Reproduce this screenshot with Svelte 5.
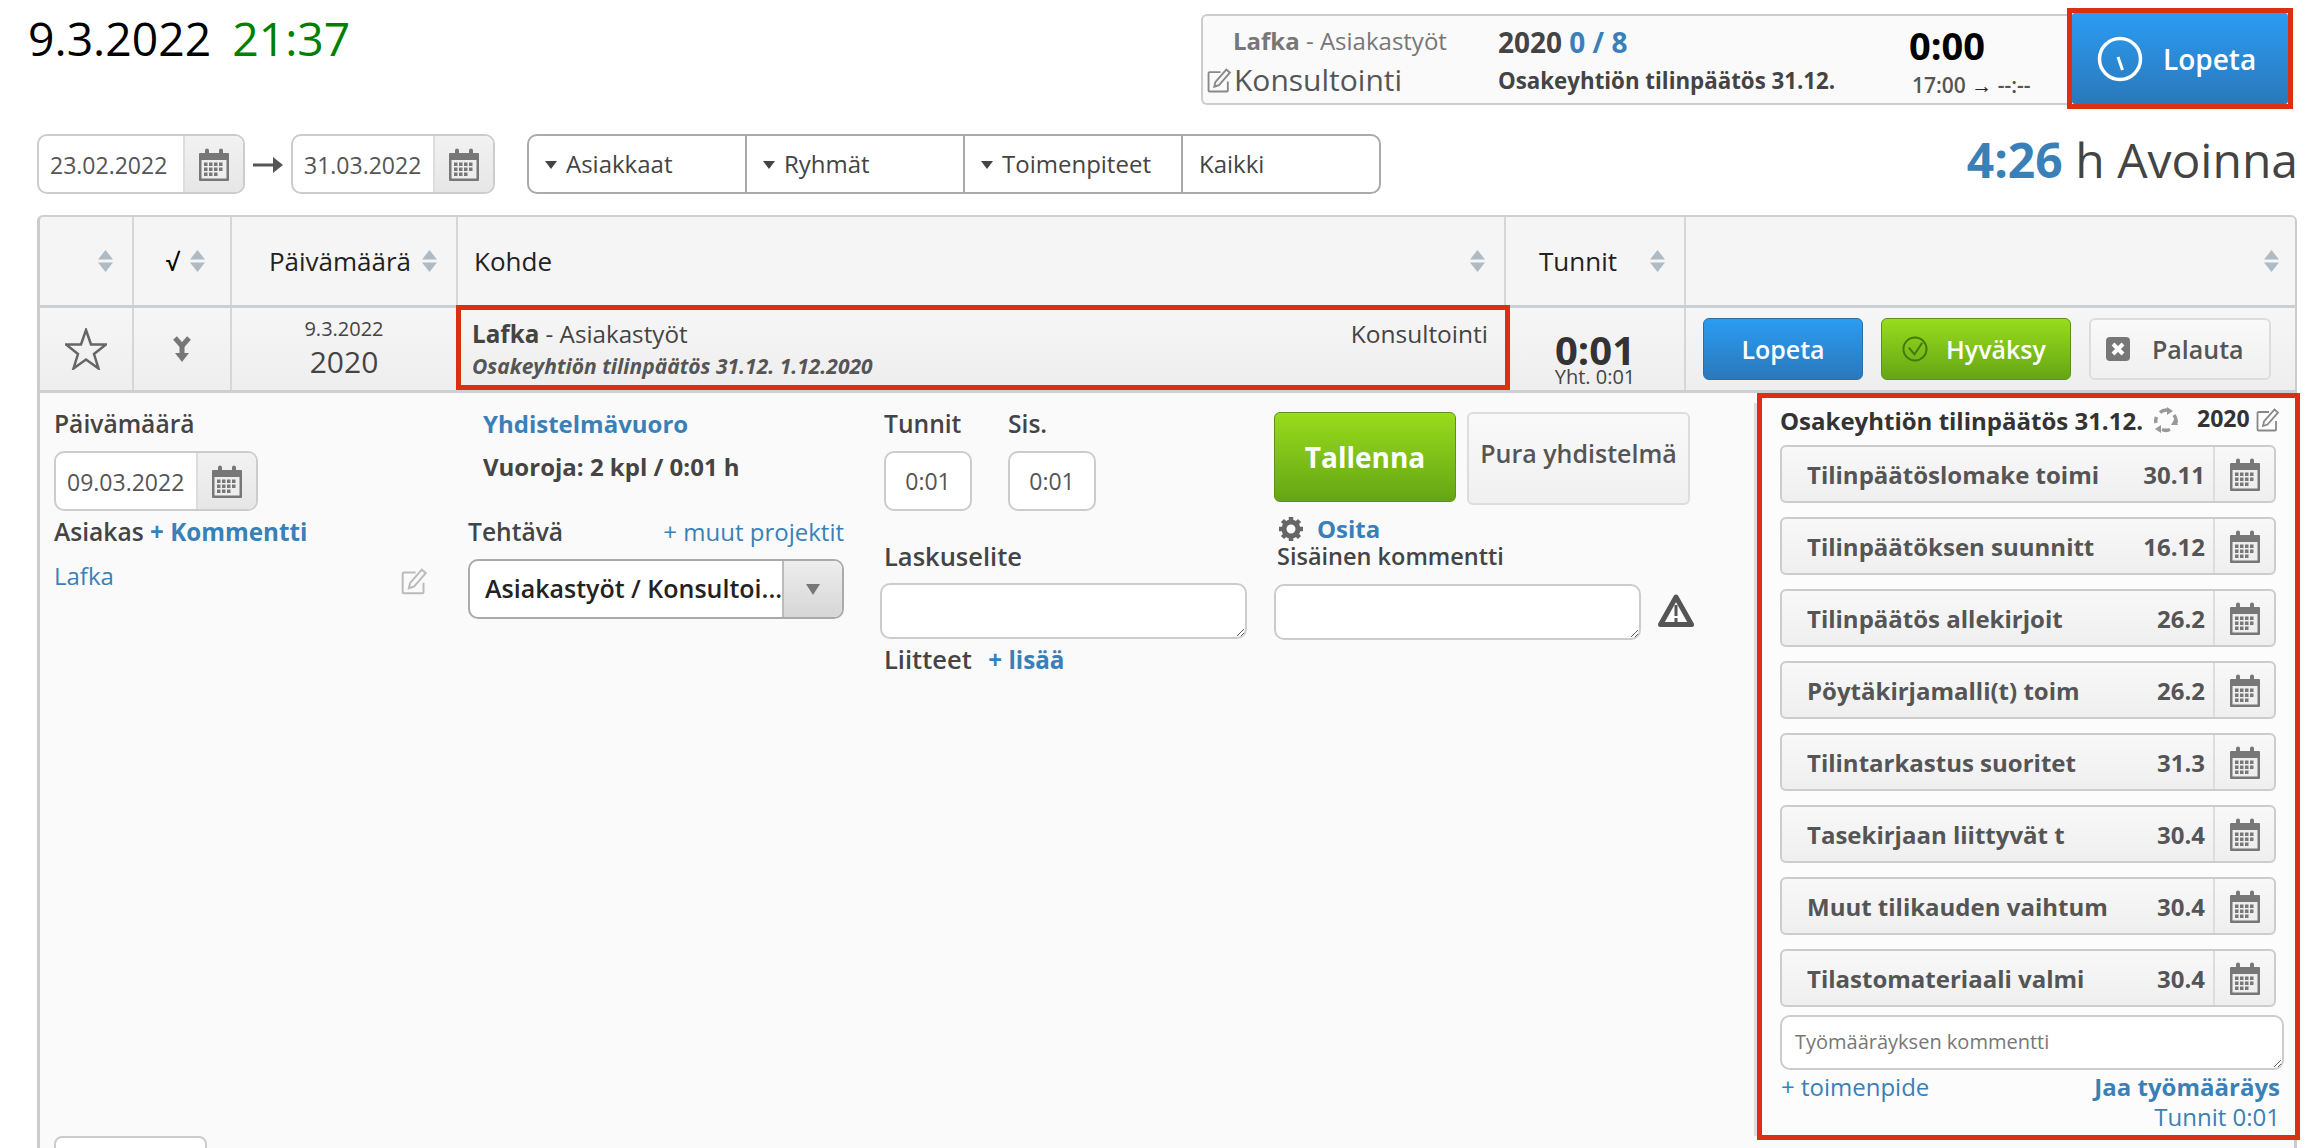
<script>
  const filters = ['Asiakkaat', 'Ryhmät', 'Toimenpiteet'];
  const tasks = [
    { name: 'Tilinpäätöslomake toimi', date: '30.11' },
    { name: 'Tilinpäätöksen suunnitt', date: '16.12' },
    { name: 'Tilinpäätös allekirjoit', date: '26.2' },
    { name: 'Pöytäkirjamalli(t) toim', date: '26.2' },
    { name: 'Tilintarkastus suoritet', date: '31.3' },
    { name: 'Tasekirjaan liittyvät t', date: '30.4' },
    { name: 'Muut tilikauden vaihtum', date: '30.4' },
    { name: 'Tilastomateriaali valmi', date: '30.4' }
  ];
</script>

{#snippet calendar()}
  <svg class="cal" width="30" height="33" viewBox="0 0 30 33">
    <path d="M1 5h5V2.500a2 2 0 0 1 4 0V5h10V2.500a2 2 0 0 1 4 0V5h5a1 1 0 0 1 1 1v26a1 1 0 0 1-1 1H1a1 1 0 0 1-1-1V6a1 1 0 0 1 1-1z" fill="#777" />
    <rect x="2.500" y="12" width="25" height="18.500" fill="#eee" />
    {#each [14.500, 19.500, 24.500] as y}
      {#each [5, 10, 15, 20] as x}
        {#if !(y === 24.500 && x === 20)}
          <rect {x} {y} width="3.500" height="3.500" fill="#777" />
        {/if}
      {/each}
    {/each}
  </svg>
{/snippet}

{#snippet sort()}
  <svg class="sort" width="17" height="22" viewBox="0 0 17 22">
    <path d="M8.500 0 16 9.500H1z" fill="#aebbc5" />
    <path d="M8.500 22 16 12.500H1z" fill="#aebbc5" />
  </svg>
{/snippet}

{#snippet edit(size, color)}
  <svg width={size} height={size} viewBox="0 0 24 24" fill="none" stroke={color} stroke-width="1.800">
    <path d="M20 13v8.500a1 1 0 0 1-1 1H2.500a1 1 0 0 1-1-1V5a1 1 0 0 1 1-1H13" />
    <path d="M7 18l1-4.500L18.500 1.500l3.500 3L11.500 16.500z" />
  </svg>
{/snippet}

<div class="page">
  <header class="top">
    <div class="now">9.3.2022 <span class="clock">21:37</span></div>
    <div class="timer">
      <div class="t-who">
        <div class="t-client"><b>Lafka</b> - Asiakastyöt</div>
        <div class="t-type">{@render edit(25, '#888')}<span>Konsultointi</span></div>
      </div>
      <div class="t-job">
        <div class="t-year">2020 <span class="blue">0 / 8</span></div>
        <div class="t-title">Osakeyhtiön tilinpäätös 31.12.</div>
      </div>
      <div class="t-time">
        <div class="t-big">0:00</div>
        <div class="t-range">17:00 <span class="arr">→</span> --:--</div>
      </div>
      <div class="stop-wrap">
        <button class="stop">
          <svg width="46" height="46" viewBox="0 0 46 46" fill="none" stroke="#fff">
            <circle cx="23" cy="23" r="20.500" stroke-width="3.500" />
            <path d="M21 21l4.500 13" stroke-width="3" />
          </svg>
          Lopeta
        </button>
      </div>
    </div>
  </header>

  <div class="filters">
    <div class="date-input">
      <span class="val">23.02.2022</span><span class="addon">{@render calendar()}</span>
    </div>
    <svg class="arrow" width="30" height="20" viewBox="0 0 30 20"><path d="M0 8.500h20V2l10 8-10 8v-6.500H0z" fill="#555" /></svg>
    <div class="date-input second">
      <span class="val">31.03.2022</span><span class="addon">{@render calendar()}</span>
    </div>
    <div class="seg">
      {#each filters as f}
        <div class="seg-item"><i class="caret"></i>{f}</div>
      {/each}
      <div class="seg-item last">Kaikki</div>
    </div>
    <div class="open"><b>4:26</b> h Avoinna</div>
  </div>

  <div class="table">
    <div class="cols head">
      <div class="c end">{@render sort()}</div>
      <div class="c end check"><span>√</span>{@render sort()}</div>
      <div class="c end date-h"><span>Päivämäärä</span>{@render sort()}</div>
      <div class="c between kohde-h"><span>Kohde</span>{@render sort()}</div>
      <div class="c between tunnit-h"><span>Tunnit</span>{@render sort()}</div>
      <div class="c end last-h">{@render sort()}</div>
    </div>
    <div class="cols row">
      <div class="c center">
        <svg width="42" height="42" viewBox="0 0 42 42"><path d="M21 2l5 14.500h15L29 26l4.500 14.500L21 31.500 8.500 40.500 13 26 1 16.500h15z" fill="none" stroke="#666" stroke-width="2.500" /></svg>
      </div>
      <div class="c center">
        <svg width="20" height="26" viewBox="0 0 20 26"><path d="M3 2l7 8 7-8" fill="none" stroke="#777" stroke-width="5" /><path d="M10 9v10" stroke="#777" stroke-width="5" /><path d="M3 17h14l-7 9z" fill="#777" /></svg>
      </div>
      <div class="c date-c">
        <div class="d-small">9.3.2022</div>
        <div class="d-year">2020</div>
      </div>
      <div class="kohde">
        <div class="k-line"><span><b>Lafka</b> - Asiakastyöt</span><span class="k-type">Konsultointi</span></div>
        <div class="k-sub">Osakeyhtiön tilinpäätös 31.12. 1.12.2020</div>
      </div>
      <div class="c hours">
        <div class="h-big">0:01</div>
        <div class="h-small">Yht. 0:01</div>
      </div>
      <div class="c actions">
        <button class="btn blue-btn">Lopeta</button>
        <button class="btn green-btn">
          <svg width="26" height="26" viewBox="0 0 27 27" fill="none" stroke="#3f7a0d" stroke-width="2"><circle cx="13.500" cy="13.500" r="12" /><path d="M7 12l6 7 8-12" /></svg>
          Hyväksy
        </button>
        <button class="btn gray-btn">
          <svg width="24" height="24" viewBox="0 0 24 24"><rect width="24" height="24" rx="4" fill="#777" /><path d="M7 7l10 10M17 7L7 17" stroke="#fff" stroke-width="4" /></svg>
          Palauta
        </button>
      </div>
    </div>

    <div class="detail">
      <div class="main">
        <div class="forms">
          <div class="col col1">
            <div class="label">Päivämäärä</div>
            <div class="date-input small">
              <span class="val">09.03.2022</span><span class="addon">{@render calendar()}</span>
            </div>
            <div class="label client"><span>Asiakas</span> <a class="link bold">+ Kommentti</a></div>
            <div class="client-row">
              <a class="link">Lafka</a>
              {@render edit(27, '#bbb')}
            </div>
          </div>

          <div class="col col2">
            <div class="label indent"><a class="link">Yhdistelmävuoro</a></div>
            <div class="shifts indent">Vuoroja: 2 kpl / 0:01 h</div>
            <div class="task-head"><span class="label">Tehtävä</span><a class="link">+ muut projektit</a></div>
            <div class="select">
              <span class="sel-val">Asiakastyöt / Konsultoi...</span>
              <span class="sel-btn"><i></i></span>
            </div>
          </div>

          <div class="col col3">
            <div class="pair">
              <div>
                <div class="label">Tunnit</div>
                <div class="time-box">0:01</div>
              </div>
              <div>
                <div class="label">Sis.</div>
                <div class="time-box">0:01</div>
              </div>
            </div>
            <div class="label lasku">Laskuselite</div>
            <textarea class="area"></textarea>
            <div class="label attach"><span>Liitteet</span> <a class="link bold">+ lisää</a></div>
          </div>

          <div class="col col4">
            <div class="pair2">
              <button class="save">Tallenna</button>
              <button class="undo">Pura yhdistelmä</button>
            </div>
            <div class="split">
              <svg width="26" height="26" viewBox="0 0 26 26"><circle cx="13" cy="13" r="7" fill="none" stroke="#666" stroke-width="5" /><path d="M13 1v5M13 20v5M1 13h5M20 13h5M4.500 4.500l3.500 3.500M18 18l3.500 3.500M21.500 4.500L18 8M8 18l-3.500 3.500" stroke="#666" stroke-width="4.500" /></svg>
              <a class="link bold">Osita</a>
            </div>
            <div class="label inner">Sisäinen kommentti</div>
            <div class="area-row">
              <textarea class="area"></textarea>
              <svg width="36" height="33" viewBox="0 0 36 33"><path d="M18 3 33.500 30.500h-31z" fill="none" stroke="#555" stroke-width="5" stroke-linejoin="round" /><path d="M18 11v11M18 24v4" stroke="#555" stroke-width="3" /></svg>
            </div>
          </div>
        </div>
        <div class="stub"></div>
      </div>

      <aside class="side">
        <div class="side-head">
          <span class="side-title">Osakeyhtiön tilinpäätös 31.12.</span>
          <svg width="26" height="26" viewBox="0 0 26 26" fill="none" stroke="#999" stroke-width="3.500"><path d="M7 5.500a10 10 0 0 1 7-2.500M21 8a10 10 0 0 1 2 8M17 22.500a10 10 0 0 1-8 0M3 16a10 10 0 0 1 .5-6" /><path d="M14 0l6 4-6 4zM25 18l-7 0 3.500-6zM8 18l0 8-6-4z" fill="#999" stroke="none" /></svg>
          <span class="side-year">2020</span>
          {@render edit(24, '#888')}
        </div>
        {#each tasks as t}
          <div class="task">
            <span class="task-name">{t.name}</span>
            <span class="task-date">{t.date}</span>
            <span class="task-cal">{@render calendar()}</span>
          </div>
        {/each}
        <textarea class="note" placeholder="Työmääräyksen kommentti"></textarea>
        <div class="side-foot">
          <a class="link">+ toimenpide</a>
          <a class="link bold">Jaa työmääräys</a>
        </div>
        <div class="side-total"><a class="link">Tunnit 0:01</a></div>
      </aside>
    </div>
  </div>
</div>

<style>
  :global(body) {
    margin: 0;
    background: #fff;
    overflow: hidden;
  }
  .page {
    width: 2312px;
    height: 1148px;
    overflow: hidden;
    font-family: "Open Sans", sans-serif;
    color: #333;
    font-size: 24px;
    box-sizing: border-box;
  }
  button {
    font-family: inherit;
    cursor: pointer;
  }
  b {
    font-weight: 700;
  }
  .blue, .link {
    color: #3a80b8;
  }
  .bold {
    font-weight: 700;
  }

  /* top bar */
  .top {
    display: flex;
    justify-content: space-between;
    padding: 8px 19px 0 28px;
    height: 134px;
    box-sizing: border-box;
  }
  .now {
    font-size: 46.300px;
    line-height: 62px;
    color: #000;
  }
  .clock {
    color: #008000;
    margin-left: 9px;
  }
  .timer {
    display: flex;
    width: 1092px;
    height: 101px;
  }
  .t-who, .t-job, .t-time {
    margin: 6px 0;
    height: 91px;
    box-sizing: border-box;
    background: #fafafa;
    border-top: 2px solid #ccc;
    border-bottom: 2px solid #ccc;
  }
  .t-who {
    width: 297px;
    border-left: 2px solid #ccc;
    border-radius: 6px 0 0 6px;
    padding: 6px 0 0 4px;
  }
  .t-client {
    font-size: 24px;
    line-height: 38px;
    color: #777;
    padding-left: 26px;
  }
  .t-type {
    display: flex;
    align-items: center;
    gap: 2px;
    font-size: 30px;
    line-height: 40px;
    color: #555;
  }
  .t-job {
    width: 411px;
    padding-top: 8px;
  }
  .t-year {
    font-size: 28px;
    line-height: 36px;
    font-weight: 700;
    color: #444;
  }
  .t-title {
    font-size: 22.300px;
    line-height: 42px;
    font-weight: 700;
    color: #444;
  }
  .t-time {
    width: 158px;
    padding: 4px 0 0 0;
  }
  .t-big {
    font-size: 38px;
    line-height: 50px;
    font-weight: 700;
    color: #000;
  }
  .t-range {
    font-size: 21px;
    line-height: 30px;
    font-weight: 600;
    color: #555;
    padding-left: 3px;
  }
  .arr {
    color: #222;
    font-weight: 700;
  }
  .stop-wrap {
    width: 226px;
    height: 101px;
    box-sizing: border-box;
    border: 5px solid #dc2e10;
    flex: none;
  }
  .stop {
    width: 100%;
    height: 100%;
    border: 0;
    border-radius: 3px;
    background: linear-gradient(#2b9cf2, #2a78ba);
    color: #fff;
    font-size: 28px;
    font-weight: 600;
    display: flex;
    align-items: center;
    gap: 20px;
    padding: 0 0 0 25px;
  }

  /* filters */
  .filters {
    display: flex;
    align-items: flex-start;
    padding-left: 37px;
    padding-right: 14px;
    height: 81px;
  }
  .date-input {
    display: flex;
    width: 208px;
    height: 60px;
    box-sizing: border-box;
    border: 2px solid #ccc;
    border-radius: 10px;
    background: #fff;
    overflow: hidden;
    font-size: 23px;
    color: #555;
  }
  .date-input.second {
    width: 204px;
  }
  .date-input.small {
    width: 204px;
  }
  .val {
    flex: 1;
    padding-left: 11px;
    line-height: 58px;
  }
  .addon {
    width: 60px;
    flex: none;
    background: linear-gradient(#f2f2f2, #e6e6e6);
    border-left: 2px solid #ddd;
    display: flex;
    align-items: center;
    justify-content: center;
    box-sizing: border-box;
  }
  .arrow {
    margin: 21px 8px 0;
  }
  .seg {
    display: flex;
    margin-left: 32px;
    height: 60px;
    box-sizing: border-box;
    border: 2px solid #aaa;
    border-radius: 10px;
    background: #fff;
    width: 854px;
  }
  .seg-item {
    width: 218px;
    box-sizing: border-box;
    border-right: 2px solid #aaa;
    padding-left: 16px;
    line-height: 54px;
    color: #444;
    display: flex;
    align-items: center;
    gap: 9px;
  }
  .seg-item.last {
    flex: 1;
    border-right: 0;
    padding-left: 16px;
  }
  .caret {
    width: 0;
    height: 0;
    border-left: 6px solid transparent;
    border-right: 6px solid transparent;
    border-top: 8px solid #444;
    margin-top: 2px;
  }
  .open {
    margin-left: auto;
    font-size: 48px;
    line-height: 52px;
    color: #444;
  }
  .open b {
    color: #3a80b8;
  }

  /* table */
  .table {
    margin: 0 15px 0 37px;
    width: 2260px;
  }
  .cols {
    display: grid;
    grid-template-columns: 94px 98px 226px 1048px 180px 1fr;
    box-sizing: border-box;
    border-left: 3px solid #ccc;
    border-right: 2px solid #ccc;
    background: #f5f5f5;
  }
  .head {
    height: 93px;
    border-top: 2px solid #ccd0d3;
    border-bottom: 3px solid #ccd0d3;
    border-radius: 6px 6px 0 0;
    font-size: 26px;
    color: #222;
  }
  .row {
    height: 85px;
    border-bottom: 3px solid #ccd0d3;
    background: linear-gradient(#f6f6f6, #eee);
  }
  .c {
    border-right: 2px solid #d4d6d8;
    display: flex;
    align-items: center;
    box-sizing: border-box;
  }
  .c:nth-child(6) {
    border-right: 0;
  }
  .end {
    justify-content: flex-end;
    padding-right: 18px;
  }
  .check {
    gap: 10px;
    padding-right: 24px;
    font-weight: 600;
    font-size: 24px;
    color: #000;
  }
  .date-h {
    gap: 10px;
    padding-right: 18px;
  }
  .between {
    justify-content: space-between;
    padding: 0 18px 0 16px;
  }
  .kohde-h {
    border-right: 2px solid #d4d6d8;
  }
  .tunnit-h {
    padding-left: 33px;
    padding-right: 18px;
  }
  .last-h {
    padding-right: 15px;
  }
  .center {
    justify-content: center;
  }
  .date-c {
    flex-direction: column;
    justify-content: center;
    padding-top: 3px;
  }
  .d-small {
    font-size: 20px;
    line-height: 26px;
    color: #444;
    margin-top: -4px;
  }
  .d-year {
    font-size: 30px;
    line-height: 40px;
    color: #444;
  }
  .kohde {
    margin: -3px -4px -3px -2px;
    border: 5px solid #dc2e10;
    padding: 7px 12px 0 11px;
    position: relative;
    background: linear-gradient(#f6f6f6, #eee);
    height: 85px;
    box-sizing: border-box;
  }
  .k-line {
    display: flex;
    justify-content: space-between;
    font-size: 24.200px;
    line-height: 34px;
    color: #444;
  }
  .k-type {
    font-size: 24.500px;
    padding-right: 5px;
  }
  .k-sub {
    font-size: 21px;
    line-height: 30px;
    font-weight: 700;
    font-style: italic;
    color: #555;
  }
  .hours {
    flex-direction: column;
    justify-content: flex-end;
    padding-bottom: 2px;
  }
  .h-big {
    font-size: 40px;
    line-height: 32px;
    font-weight: 700;
    color: #333;
  }
  .h-small {
    font-size: 20px;
    line-height: 22px;
    color: #444;
  }
  .actions {
    gap: 18px;
    padding: 10px 0 0 17px;
    align-items: flex-start;
  }
  .btn {
    height: 62px;
    border-radius: 6px;
    font-size: 25px;
    font-weight: 600;
    display: flex;
    align-items: center;
    box-sizing: border-box;
    padding: 0;
  }
  .blue-btn {
    width: 160px;
    border: 1px solid #2a70a8;
    background: linear-gradient(#2b9cf2, #2a78ba);
    color: #fff;
    justify-content: center;
  }
  .green-btn {
    width: 190px;
    border: 1px solid #5a9412;
    background: linear-gradient(#98dc1c, #65a515);
    color: #fff;
    gap: 18px;
    padding-left: 20px;
  }
  .gray-btn {
    width: 182px;
    border: 2px solid #ddd;
    background: linear-gradient(#f9f9f9, #f0f0f0);
    color: #555;
    gap: 22px;
    padding-left: 15px;
  }

  /* detail */
  .detail {
    display: flex;
    align-items: flex-start;
    border-left: 3px solid #ccc;
    border-right: 3px solid #ccc;
    background: #fafafa;
    height: 900px;
  }
  .main {
    width: 1717px;
    flex: none;
  }
  .forms {
    display: flex;
    height: 733px;
    margin-top: 10px;
    padding-left: 14px;
    border-right: 3px solid #ddd;
    box-sizing: content-box;
  }
  .col {
    flex: none;
    box-sizing: border-box;
  }
  .col1 {
    width: 414px;
  }
  .col2 {
    width: 416px;
  }
  .col3 {
    width: 390px;
  }
  .label {
    font-size: 24.600px;
    font-weight: 600;
    line-height: 30px;
    color: #444;
    margin-top: 6px;
  }
  .col1 .date-input {
    margin-top: 12px;
  }
  .client {
    margin-top: 6px;
  }
  .client .link {
    font-size: 24.200px;
  }
  .client-row {
    display: flex;
    justify-content: space-between;
    align-items: flex-start;
    width: 374px;
    margin-top: 13px;
    line-height: 32px;
  }
  .client-row svg {
    margin-top: 8px;
  }
  .indent {
    padding-left: 15px;
  }
  .indent .link {
    font-size: 24px;
    font-weight: 700;
  }
  .shifts {
    font-weight: 700;
    font-size: 24px;
    line-height: 32px;
    margin-top: 12px;
    color: #444;
  }
  .task-head {
    display: flex;
    justify-content: space-between;
    width: 376px;
    margin-top: 34px;
    line-height: 30px;
  }
  .task-head .label {
    margin: 0;
  }
  .select {
    display: flex;
    width: 376px;
    height: 60px;
    box-sizing: border-box;
    margin-top: 12px;
    border: 2px solid #aaa;
    border-radius: 10px;
    background: #fff;
    overflow: hidden;
  }
  .sel-val {
    flex: 1;
    padding-left: 15px;
    font-size: 25px;
    font-weight: 600;
    line-height: 54px;
    color: #222;
    white-space: nowrap;
  }
  .sel-btn {
    width: 58px;
    flex: none;
    background: linear-gradient(#eee, #d6d6d6);
    border-left: 2px solid #bbb;
    display: flex;
    align-items: center;
    justify-content: center;
  }
  .sel-btn i {
    border-left: 7px solid transparent;
    border-right: 7px solid transparent;
    border-top: 11px solid #777;
  }
  .pair {
    display: flex;
    gap: 36px;
    width: 211px;
  }
  .time-box {
    width: 88px;
    height: 60px;
    margin-top: 12px;
    box-sizing: border-box;
    border: 2px solid #ccc;
    border-radius: 10px;
    background: #fff;
    font-size: 23px;
    line-height: 56px;
    text-align: center;
    color: #555;
  }
  .lasku {
    margin-top: 30px;
    font-size: 25.500px;
  }
  .area {
    display: block;
    width: 367px;
    height: 56px;
    margin: 12px 0 0 -4px;
    box-sizing: border-box;
    border: 2px solid #ccc;
    border-radius: 10px;
    background: #fff;
    outline: none;
  }
  .attach {
    margin-top: 5px;
    font-size: 25.500px;
  }
  .attach .link {
    margin-left: 10px;
    font-size: 24.200px;
  }
  .pair2 {
    display: flex;
    gap: 11px;
    margin-top: 9px;
    align-items: flex-start;
  }
  .save {
    width: 182px;
    height: 90px;
    border: 1px solid #5a9412;
    border-radius: 6px;
    background: linear-gradient(#98dc1c, #65a515);
    color: #fff;
    font-size: 28px;
    font-weight: 700;
    padding: 0;
  }
  .undo {
    width: 223px;
    height: 93px;
    border: 2px solid #ddd;
    border-radius: 6px;
    background: linear-gradient(#f9f9f9, #f0f0f0);
    color: #555;
    font-size: 25px;
    font-weight: 600;
    padding: 0 0 12px;
  }
  .split {
    display: flex;
    align-items: center;
    gap: 13px;
    margin: 6px 0 0 4px;
    line-height: 36px;
    height: 36px;
  }
  .inner {
    margin-top: -6px;
    margin-bottom: 1px;
    margin-left: 3px;
    font-size: 23.500px;
  }
  .area-row {
    display: flex;
    gap: 17px;
    align-items: center;
    margin-left: 4px;
  }
  .area-row svg {
    margin-top: 9px;
  }
  .stub {
    width: 153px;
    height: 60px;
    margin: 0 0 0 14px;
    border: 2px solid #ccc;
    border-radius: 8px;
    background: #fff;
    box-sizing: border-box;
  }

  /* side panel */
  .side {
    width: 543px;
    height: 747px;
    flex: none;
    box-sizing: border-box;
    margin: 0 -3px 0 0;
    border: 5px solid #dc2e10;
    padding: 4px 0 0 18px;
    position: relative;
    background: #fcfcfc;
  }
  .side-head {
    display: flex;
    align-items: center;
    height: 36px;
    margin-bottom: 7px;
    font-weight: 700;
    color: #333;
  }
  .side-title {
    font-size: 24px;
    white-space: nowrap;
  }
  .side-head svg:first-of-type {
    margin-left: 10px;
  }
  .side-year {
    margin: -5px 6px 0 18px;
    font-size: 23px;
  }
  .task {
    display: flex;
    align-items: center;
    width: 496px;
    height: 58px;
    box-sizing: border-box;
    margin-bottom: 14px;
    border: 2px solid #ccc;
    border-radius: 6px;
    background: linear-gradient(#f8f8f8, #efefef);
    font-size: 24px;
    font-weight: 700;
    color: #555;
  }
  .task-name {
    flex: 1;
    padding-left: 25px;
    white-space: nowrap;
  }
  .task-date {
    padding-right: 8px;
  }
  .task-cal {
    width: 61px;
    height: 100%;
    flex: none;
    box-sizing: border-box;
    border-left: 2px solid #ddd;
    display: flex;
    align-items: center;
    justify-content: center;
  }
  .note {
    display: block;
    width: 504px;
    height: 55px;
    margin-top: -6px;
    box-sizing: border-box;
    border: 2px solid #ccc;
    border-radius: 10px;
    background: #fff;
    padding: 11px 13px;
    font-family: inherit;
    font-size: 20px;
    outline: none;
  }
  .note::placeholder {
    color: #777;
  }
  .side-foot {
    display: flex;
    justify-content: space-between;
    width: 500px;
    margin-top: 1px;
    padding-left: 1px;
    box-sizing: border-box;
    line-height: 32px;
  }
  .side-total {
    width: 500px;
    text-align: right;
    line-height: 32px;
    margin-top: -2px;
  }
</style>
